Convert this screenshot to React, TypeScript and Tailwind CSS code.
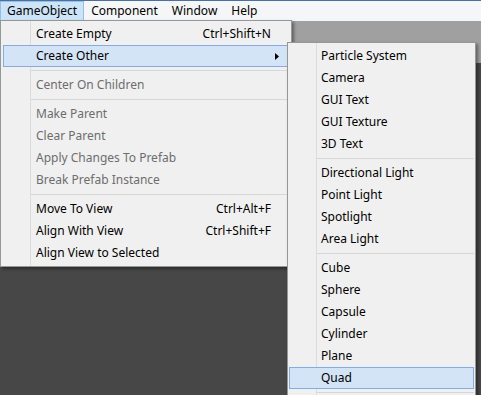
import React from 'react';

type Item =
    | { kind: 'item'; label: string; shortcut?: string; disabled?: boolean; active?: boolean; submenu?: boolean }
    | { kind: 'sep' };

const mainItems: Item[] = [
    { kind: 'item', label: 'Create Empty', shortcut: 'Ctrl+Shift+N' },
    { kind: 'item', label: 'Create Other', submenu: true, active: true },
    { kind: 'sep' },
    { kind: 'item', label: 'Center On Children', disabled: true },
    { kind: 'sep' },
    { kind: 'item', label: 'Make Parent', disabled: true },
    { kind: 'item', label: 'Clear Parent', disabled: true },
    { kind: 'item', label: 'Apply Changes To Prefab', disabled: true },
    { kind: 'item', label: 'Break Prefab Instance', disabled: true },
    { kind: 'sep' },
    { kind: 'item', label: 'Move To View', shortcut: 'Ctrl+Alt+F' },
    { kind: 'item', label: 'Align With View', shortcut: 'Ctrl+Shift+F' },
    { kind: 'item', label: 'Align View to Selected' },
];

// the rest of this submenu runs off the bottom of the window
const otherItems: Item[] = [
    { kind: 'item', label: 'Particle System' },
    { kind: 'item', label: 'Camera' },
    { kind: 'item', label: 'GUI Text' },
    { kind: 'item', label: 'GUI Texture' },
    { kind: 'item', label: '3D Text' },
    { kind: 'sep' },
    { kind: 'item', label: 'Directional Light' },
    { kind: 'item', label: 'Point Light' },
    { kind: 'item', label: 'Spotlight' },
    { kind: 'item', label: 'Area Light' },
    { kind: 'sep' },
    { kind: 'item', label: 'Cube' },
    { kind: 'item', label: 'Sphere' },
    { kind: 'item', label: 'Capsule' },
    { kind: 'item', label: 'Cylinder' },
    { kind: 'item', label: 'Plane' },
    { kind: 'item', label: 'Quad', active: true },
    { kind: 'sep' },
];

const MenuRows: React.FC<{ items: Item[]; sub?: boolean }> = ({ items, sub }) => (
    <>
        {items.map((it, i) =>
            it.kind === 'sep' ? (
                <div key={i} className="flex h-[7px] items-center pl-[28px]">
                    <div className="h-px flex-1 bg-[#d7d7d7]" />
                </div>
            ) : (
                <div
                    key={i}
                    className={`relative flex h-[22px] items-center border pr-[17px] ${sub ? 'pl-[31px]' : 'pl-[32px]'} ${
                        it.active ? 'border-[#84ace0] bg-[#d2e4f5]' : 'border-transparent'
                    } ${it.disabled ? 'text-[#6d6d6d]' : 'text-black'}`}
                >
                    <span>{it.label}</span>
                    {it.shortcut && <span className="ml-auto">{it.shortcut}</span>}
                    {it.submenu && (
                        <svg className="ml-auto mr-[-8px]" width="4" height="7" viewBox="0 0 4 7">
                            <path d="M0 0 L4 3.5 L0 7 Z" fill="#000" />
                        </svg>
                    )}
                </div>
            )
        )}
    </>
);

export default function App() {
    return (
        <div className="relative flex h-[395px] w-[481px] flex-col overflow-hidden bg-[#474747] font-['Noto_Sans',sans-serif] text-[12px] leading-none">
            {/* Menu bar */}
            <div className="h-px bg-[#4d6f9e]" />
            <div className="flex h-[20px] bg-[#f5f6f7] text-black">
                <div className="flex items-center border border-[#93bfe8] bg-[#cce4f7] px-[6px]">GameObject</div>
                <div className="flex items-center border border-transparent px-[6px]">Component</div>
                <div className="flex items-center border border-transparent px-[6px]">Window</div>
                <div className="flex items-center border border-transparent px-[6px]">Help</div>
            </div>

            {/* Toolbar strip */}
            <div className="h-[42px] bg-[#a0a0a0]" />

            {/* Scene area */}
            <div className="flex-1 bg-[#474747]" />

            {/* GameObject menu */}
            <div className="absolute left-0 top-[20px] w-[292px] border border-[#979797] bg-[#f0f0f0] p-[2px] shadow-[2px_2px_3px_rgba(0,0,0,0.4)]">
                <div className="absolute bottom-0 left-[29px] top-0 w-px bg-[#dcdcdc]" />
                <MenuRows items={mainItems} />
            </div>

            {/* Create Other submenu */}
            <div className="absolute left-[287px] top-[42px] w-[189px] border border-[#979797] bg-[#f0f0f0] px-[1px] py-[2px] shadow-[2px_2px_3px_rgba(0,0,0,0.4)]">
                <div className="absolute bottom-0 left-[28px] top-0 w-px bg-[#dcdcdc]" />
                <MenuRows items={otherItems} sub />
            </div>
        </div>
    );
}
